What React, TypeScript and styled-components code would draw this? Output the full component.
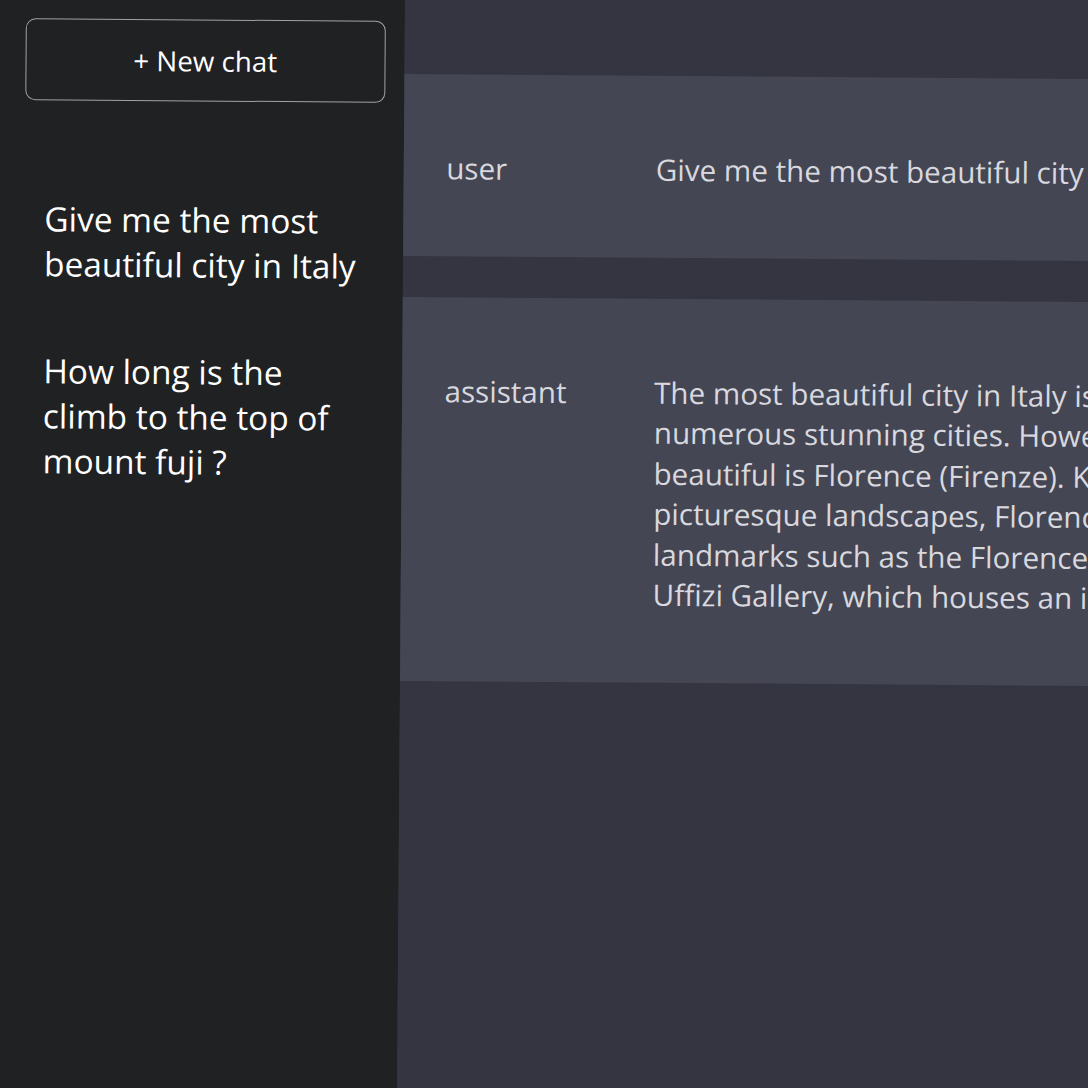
import React from "react";
import styled, { createGlobalStyle } from "styled-components";

const BLEED = 40;

const Global = createGlobalStyle`
  html, body {
    margin: 0;
    padding: 0;
    overflow: hidden;
    background: #343541;
  }
  body {
    font-family: "Open Sans", "Noto Sans", sans-serif;
    -webkit-font-smoothing: antialiased;
  }
  #root {
    width: 1088px;
    height: 1088px;
    overflow: hidden;
  }
`;

const Stage = styled.div`
  display: grid;
  grid-template-columns: ${405 + BLEED}px 1fr;
  width: 1900px;
  height: 1220px;
  margin: -${BLEED}px 0 0 -${BLEED}px;
  transform: rotate(0.42deg);
  transform-origin: ${BLEED}px ${BLEED}px;
`;

const Sidebar = styled.aside`
  background: #202123;
  padding: ${18 + BLEED}px 20px 0 ${26 + BLEED}px;
  display: flex;
  flex-direction: column;
`;

const NewChatButton = styled.button`
  box-sizing: border-box;
  width: 359.5px;
  height: 82px;
  display: flex;
  align-items: center;
  justify-content: center;
  padding: 0;
  background: transparent;
  border: 1.75px solid #a2a2a6;
  border-radius: 10px;
  color: #ffffff;
  font-family: "Open Sans", "Noto Sans", sans-serif;
  font-size: 27.75px;
  cursor: pointer;
`;

const History = styled.ul`
  list-style: none;
  margin: 96px 0 0;
  padding: 0 19px 0 20px;
  display: flex;
  flex-direction: column;
  gap: 62px;
`;

const HistoryItem = styled.li`
  color: #ffffff;
  font-size: 33.4px;
  line-height: 45px;
  cursor: pointer;
`;

const Main = styled.main`
  background: #343541;
  padding-top: ${71 + BLEED}px;
  display: flex;
  flex-direction: column;
  gap: 41.5px;
`;

const MessageRow = styled.div`
  background: #444654;
  display: grid;
  grid-template-columns: 209.5px 1036px;
  align-items: start;
  padding: 73.5px 0 68px 42.5px;
  color: #d8d8de;
  font-size: 29.6px;
  line-height: 40.4px;
`;

const Role = styled.div`
  white-space: nowrap;
`;

const Content = styled.div``;

const history = [
  "Give me the most beautiful city in Italy",
  "How long is the climb to the top of mount fuji ?",
];

const messages = [
  { role: "user", content: "Give me the most beautiful city in Italy" },
  {
    role: "assistant",
    content:
      "The most beautiful city in Italy is quite subjective, as the country boasts numerous stunning cities. However, one city often regarded as the most beautiful is Florence (Firenze). Known for its history, Renaissance art and picturesque landscapes, Florence is home to many famous and historic landmarks such as the Florence Cathedral, Ponte Vecchio, and the grand Uffizi Gallery, which houses an impressive collection of art.",
  },
];

export default function App() {
  return (
    <>
      <Global />
      <Stage>
        <Sidebar>
          <NewChatButton>+ New chat</NewChatButton>
          <History>
            {history.map((h) => (
              <HistoryItem key={h}>{h}</HistoryItem>
            ))}
          </History>
        </Sidebar>
        <Main>
          {messages.map((m, i) => (
            <MessageRow key={i}>
              <Role>{m.role}</Role>
              <Content>{m.content}</Content>
            </MessageRow>
          ))}
        </Main>
      </Stage>
    </>
  );
}
